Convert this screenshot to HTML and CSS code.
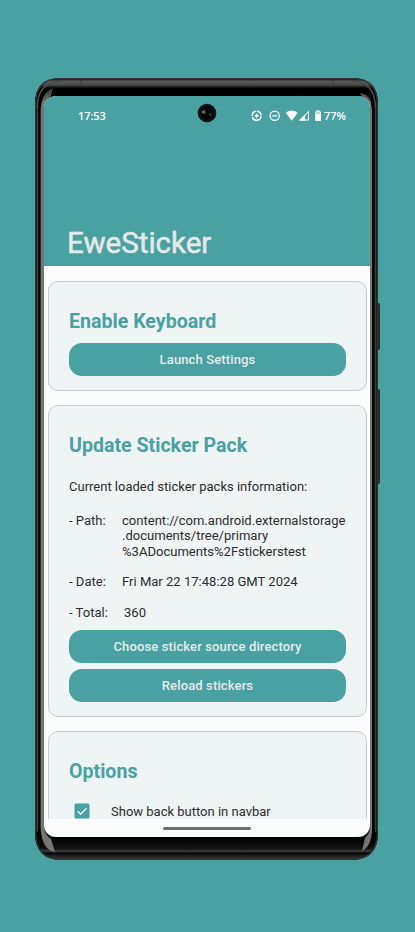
FILE: index.html
```html
<!DOCTYPE html>
<html lang="en">
<head>
<meta charset="utf-8">
<title>EweSticker</title>
<link rel="stylesheet" href="styles.css">
</head>
<body>
<div class="phone">
  <svg class="frame" width="347" height="786" viewBox="33 76 347 786" aria-hidden="true">
    <defs>
      <linearGradient id="top" x1="0" y1="78" x2="0" y2="97" gradientUnits="userSpaceOnUse">
        <stop offset="0" stop-color="#222"/><stop offset=".1" stop-color="#222"/><stop offset=".16" stop-color="#5c5c5c"/><stop offset=".36" stop-color="#4c4c4c"/><stop offset=".48" stop-color="#181818"/><stop offset=".55" stop-color="#000"/>
      </linearGradient>
      <linearGradient id="bottom" x1="0" y1="837" x2="0" y2="860" gradientUnits="userSpaceOnUse">
        <stop offset="0" stop-color="#000"/><stop offset=".5" stop-color="#121212"/><stop offset=".62" stop-color="#3a3a3a"/><stop offset=".7" stop-color="#050505"/><stop offset=".8" stop-color="#1c1c1c"/><stop offset="1" stop-color="#3a3c3c"/>
      </linearGradient>
      <linearGradient id="glow" x1="0" y1="88" x2="0" y2="112" gradientUnits="userSpaceOnUse">
        <stop offset="0" stop-color="#333"/><stop offset=".6" stop-color="#777474"/>
      </linearGradient>
    </defs>
    <path d="M377 303h2q1 0 1 2v43q0 2-1 2h-2zM377 389h2q1 0 1 2v91q0 2-1 2h-2z" fill="#2b2e2e"/>
    <rect x="35" y="78" width="343" height="782" rx="25" fill="#171919"/>
    <path d="M35 104Q35 78 60 78H353Q378 78 378 104L371 110V97H43V110Z" fill="url(#top)"/>
    <path d="M35 832L43 826V837H371V826L378 832Q378 860 352 860H61Q35 860 35 832Z" fill="url(#bottom)"/>
    <path d="M35.7 104Q35.7 78.7 60 78.7H353Q377.3 78.7 377.3 104V833Q377.3 859.3 352 859.3H61Q35.7 859.3 35.7 833Z" fill="none" stroke="#303434" stroke-width="1.3"/>
    <path d="M37.2 108Q37.5 82 60 81.5M375.5 108Q375 82 353 81.5" fill="none" stroke="#4c4c4c" stroke-width="1.5"/>
    <path d="M40.5 112Q41 93 53 88L50 99Q44 103 44 112V824Q44 835 51 839L55 852Q42 850 40.5 828Z" fill="url(#glow)"/>
    <path d="M370 827V113Q370 104 365 101L360 93Q371 94 372 110V828Q372 846 362 851L365 838Q370 834 370 827Z" fill="url(#glow)"/>
    <path d="M37.5 108V832M375.5 108V832" stroke="#3a3c3c" stroke-width="1"/>
    <path d="M39.5 108V830M373.2 108V830" stroke="#060606" stroke-width="1.8"/>
    <path d="M81 79.5v5M333 79.5v5M190 855v5M242 855v5" stroke="#303030" stroke-width=".7"/>
  </svg>
  <main class="screen">
    <header class="header">
      <div class="status">
        <span class="time">17:53</span>
        <svg class="icons" width="72" height="14" viewBox="250 109 72 14" aria-hidden="true">
          <g fill="none" stroke="#fff">
            <circle cx="256.6" cy="115.7" r="4.5" stroke-width="1.5" stroke-dasharray="12.2 1.2 6.3 1.2 6.2 1.2"/>
            <path d="M256.6 113.7v4M254.6 115.7h4" stroke-width="1.5"/>
            <circle cx="274.7" cy="115.8" r="4.6" stroke-width="1.2"/>
            <path d="M272.3 115.8h4.8" stroke-width="1.3"/>
            <path d="M308.5 111.7v8.3h-8.4z" stroke-width="1.1"/>
          </g>
          <path d="M285.7 112.7q6-4.6 12 0l-6 8zM299.5 120.5l5.6-5.6v5.6zM315.2 111.5h1.3v-1.2h3v1.2h1.5v9.5h-5.8z" fill="#fff"/>
          <path d="M316 113h4.2" stroke="#49a1a2" stroke-width=".8"/>
        </svg>
        <span class="battery">77%</span>
        <svg class="camera" width="20" height="20" viewBox="0 0 20 20" aria-hidden="true">
          <circle cx="10" cy="10" r="9.3" fill="#101212"/><circle cx="10" cy="10" r="6.5" fill="#060707"/>
          <circle cx="6.8" cy="9" r="2.3" fill="#303434"/><circle cx="6.4" cy="9" r="1" fill="#959b9b"/><circle cx="13.2" cy="11.5" r="1.2" fill="#3d4242"/>
        </svg>
      </div>
      <h1 class="title"><span>EweSticker</span></h1>
    </header>
    <div class="content">
      <section class="card card-keyboard">
        <h2>Enable Keyboard</h2>
        <button class="btn">Launch Settings</button>
      </section>
      <section class="card card-pack">
        <h2>Update Sticker Pack</h2>
        <p class="intro">Current loaded sticker packs information:</p>
        <dl class="info">
          <dt>- Path:</dt>
          <dd>content://com.android.externalstorage<br>.documents/tree/primary<br>%3ADocuments%2Fstickerstest</dd>
          <dt>- Date:</dt>
          <dd>Fri Mar 22 17:48:28 GMT 2024</dd>
          <dt>- Total:</dt>
          <dd class="total">360</dd>
        </dl>
        <button class="btn">Choose sticker source directory</button>
        <button class="btn">Reload stickers</button>
      </section>
      <section class="card card-options">
        <h2>Options</h2>
        <div class="option">
          <svg width="16" height="16" viewBox="0 0 16 16" aria-hidden="true"><rect x=".5" y=".5" width="15" height="15" rx="1.5" fill="#49a1a2"/><path d="M3.7 8.2l3 3 5.7-6" fill="none" stroke="#eef4f5" stroke-width="1.5"/></svg>
          <span>Show back button in navbar</span>
        </div>
      </section>
    </div>
    <footer class="nav"><div class="handle"></div></footer>
  </main>
</div>
</body>
</html>
```

FILE: styles.css
```css
* { box-sizing: border-box; }
body {
  margin: 0;
  height: 932px;
  padding: 96px 0 0 44px;
  overflow: hidden;
  background: #49a1a2;
  font-family: Roboto, "Liberation Sans", sans-serif;
  font-size: 13px;
  color: #2b2e2f;
}
.phone { position: relative; width: 326px; height: 741px; }
.frame { position: absolute; left: -11px; top: -20px; }
.screen {
  position: relative;
  display: flex;
  flex-direction: column;
  width: 326px;
  height: 741px;
  overflow: hidden;
  border-radius: 12px;
  background: #fbfdfd;
}
.header {
  display: flex;
  flex-direction: column;
  justify-content: space-between;
  height: 170px;
  flex: none;
  padding: 11px 23px 5px;
  background: #49a1a2;
}
.status {
  position: relative;
  display: flex;
  align-items: center;
  height: 18px;
  padding-left: 11px;
  color: #fff;
  font-family: "Open Sans", sans-serif;
  font-size: 11px;
  font-weight: 600;
}
.time, .battery { line-height: 16px; }
.time { letter-spacing: -.1px; }
.icons { margin-left: auto; }
.battery { width: 23px; margin-left: 2px; white-space: nowrap; }
.camera { position: absolute; left: 130px; top: -4px; }
.title {
  margin: 0;
  font-size: 29.5px;
  font-weight: 400;
  line-height: 36px;
  color: #e7e9e9;
  -webkit-text-stroke: .5px #e7e9e9;
}
.content {
  display: flex;
  flex-direction: column;
  gap: 14px;
  height: 553px;
  flex: none;
  padding: 15px 3px 0 4px;
  overflow: hidden;
}
.card {
  display: flex;
  flex-direction: column;
  flex: none;
  padding: 28px 20px 0;
  border: 1px solid #c9cbd0;
  border-radius: 10px;
  background: #eff4f5;
}
.card-keyboard { height: 110px; }
.card-pack { height: 312px; }
.card-options { height: 150px; }
h2 {
  margin: 0;
  font-size: 19.6px;
  font-weight: 700;
  line-height: 24px;
  color: #49a1a2;
}
.btn {
  height: 33px;
  flex: none;
  margin: 0;
  padding: 0;
  border: 0;
  border-radius: 13px;
  background: #49a1a2;
  color: #e4ebeb;
  font: 500 13px/33px Roboto, sans-serif;
  letter-spacing: .13px;
}
.card-keyboard .btn { margin-top: 9px; }
.btn + .btn { margin-top: 6px; }
.intro { margin: 21px 0 0; line-height: 15.3px; }
.info {
  display: grid;
  grid-template-columns: 53px 1fr;
  row-gap: 15.3px;
  margin: 18.7px 0 10.2px;
  font-size: 13.05px;
  line-height: 15.3px;
  white-space: nowrap;
}
.info dd { margin: 0; }
.info .total { padding-left: 2px; }
.option { display: flex; align-items: center; gap: 21px; margin: 19px 0 0 5px; }
.nav { display: flex; justify-content: center; padding-top: 8px; }
.handle { width: 88px; height: 3px; border-radius: 2px; background: #6c6e6e; }
```
